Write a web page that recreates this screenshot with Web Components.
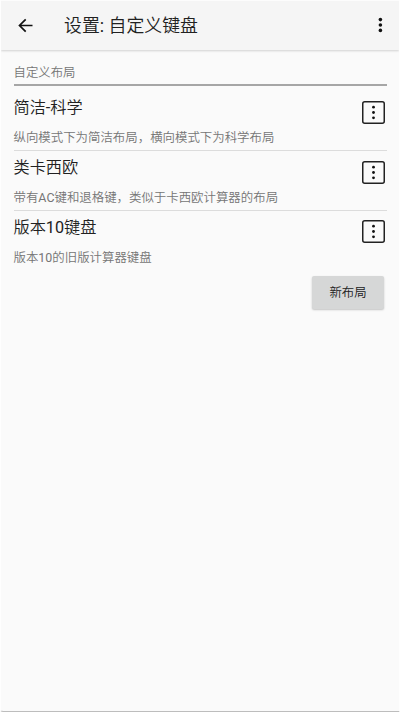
<!DOCTYPE html>
<html lang="zh-CN">
<head>
<meta charset="UTF-8">
<meta name="viewport" content="width=device-width, initial-scale=1">
<title>设置: 自定义键盘</title>
<style>
  html, body {
    height: 100%;
  }
  body {
    margin: 0;
    background: #fafafa;
    color: #212121;
    font-family: Roboto, "Noto Sans CJK SC DemiLight", "Noto Sans CJK SC", sans-serif;
  }
</style>
</head>
<body>
<settings-page>
  <app-header slot="header">设置: 自定义键盘</app-header>
  <section-label>自定义布局</section-label>
  <layout-item name="简洁-科学">纵向模式下为简洁布局，横向模式下为科学布局</layout-item>
  <layout-item name="类卡西欧">带有AC键和退格键，类似于卡西欧计算器的布局</layout-item>
  <layout-item name="版本10键盘">版本10的旧版计算器键盘</layout-item>
  <new-button slot="actions">新布局</new-button>
</settings-page>

<script>
class SettingsPage extends HTMLElement {
  constructor() {
    super();
    this.attachShadow({ mode: 'open' });
    this.shadowRoot.innerHTML = `
      <style>
        :host {
          display: flex;
          flex-direction: column;
          box-sizing: border-box;
          height: 100vh;
          background: #fafafa;
          border-left: 1px solid #fefefe;
          border-right: 1px solid #fefefe;
          border-bottom: 1px solid #bdbdbd;
          border-bottom-left-radius: 3px;
          overflow: hidden;
        }
        main {
          padding: 10px 12.5px 0 12.5px;
        }
        .actions {
          display: flex;
          justify-content: flex-end;
          padding: 5.4px 2.5px 0 0;
        }
      </style>
      <slot name="header"></slot>
      <main>
        <slot></slot>
        <div class="actions"><slot name="actions"></slot></div>
      </main>
    `;
  }
}

class AppHeader extends HTMLElement {
  constructor() {
    super();
    this.attachShadow({ mode: 'open' });
    this.shadowRoot.innerHTML = `
      <style>
        :host {
          display: flex;
          align-items: center;
          flex: none;
          box-sizing: border-box;
          height: 50px;
          padding: 0 15px 0 16px;
          background: #f5f5f5;
          border-top: 1px solid #fcfcfc;
          box-shadow: 0 1px 2px rgba(0,0,0,0.16);
        }
        h1 {
          flex: 1;
          margin: 1px 0 0 31px;
          font-size: 17.9px;
          font-weight: 400;
          line-height: 26px;
        }
        svg {
          display: block;
          flex: none;
        }
        .menu {
          margin-top: -2px;
        }
      </style>
      <svg width="16" height="16" viewBox="0 0 16 16" fill="none" stroke="#111" stroke-width="1.7">
        <path d="M15.5 7.5H2.5M8.7 1.3L2.5 7.5l6.2 6.2"/>
      </svg>
      <h1><slot></slot></h1>
      <svg class="menu" width="8" height="16" viewBox="0 0 8 16" fill="#111">
        <circle cx="4.4" cy="2.6" r="1.8"/>
        <circle cx="4.4" cy="8" r="1.8"/>
        <circle cx="4.4" cy="13.4" r="1.8"/>
      </svg>
    `;
  }
}

class SectionLabel extends HTMLElement {
  constructor() {
    super();
    this.attachShadow({ mode: 'open' });
    this.shadowRoot.innerHTML = `
      <style>
        :host {
          display: block;
          box-sizing: border-box;
          height: 26px;
          padding-top: 1px;
          border-bottom: 2px solid #a6a6a6;
          color: #757575;
          font-size: 12.4px;
          line-height: 24px;
        }
      </style>
      <slot></slot>
    `;
  }
}

class LayoutItem extends HTMLElement {
  constructor() {
    super();
    this.attachShadow({ mode: 'open' });
  }

  connectedCallback() {
    this.shadowRoot.innerHTML = `
      <style>
        :host {
          display: flex;
          justify-content: space-between;
          box-sizing: border-box;
          height: 59.6px;
          border-bottom: 1px solid #dcdcdc;
        }
        :host(:first-of-type) {
          height: 65px;
          padding-top: 5px;
        }
        :host(:last-of-type) {
          border-bottom-color: transparent;
        }
        h2 {
          margin: 4px 0 0;
          font-size: 16.2px;
          font-weight: 400;
          line-height: 26px;
        }
        p {
          margin: 7px 0 0;
          color: #757575;
          font-size: 12.43px;
          line-height: 20px;
          white-space: nowrap;
        }
        svg {
          display: block;
          flex: none;
          margin: 9.8px 1.5px 0 0;
        }
      </style>
      <div>
        <h2>${this.getAttribute('name')}</h2>
        <p><slot></slot></p>
      </div>
      <svg width="23" height="23" viewBox="0 0 23 23">
        <rect x="0.75" y="0.75" width="21.5" height="21.5" rx="2" fill="none" stroke="#222" stroke-width="1.5"/>
        <g fill="#111">
          <circle cx="11.5" cy="6.2" r="1.4"/>
          <circle cx="11.5" cy="11.5" r="1.4"/>
          <circle cx="11.5" cy="16.8" r="1.4"/>
        </g>
      </svg>
    `;
  }
}

class NewButton extends HTMLElement {
  constructor() {
    super();
    this.attachShadow({ mode: 'open' });
    this.shadowRoot.innerHTML = `
      <style>
        :host {
          display: block;
        }
        button {
          display: block;
          width: 72px;
          height: 33px;
          padding: 0;
          border: none;
          border-radius: 2px;
          background: #d6d7d7;
          box-shadow: 0 1px 2px rgba(0,0,0,0.22);
          color: #212121;
          font: inherit;
          font-size: 12.4px;
        }
      </style>
      <button><slot></slot></button>
    `;
  }
}

customElements.define('settings-page', SettingsPage);
customElements.define('app-header', AppHeader);
customElements.define('section-label', SectionLabel);
customElements.define('layout-item', LayoutItem);
customElements.define('new-button', NewButton);
</script>
</body>
</html>
